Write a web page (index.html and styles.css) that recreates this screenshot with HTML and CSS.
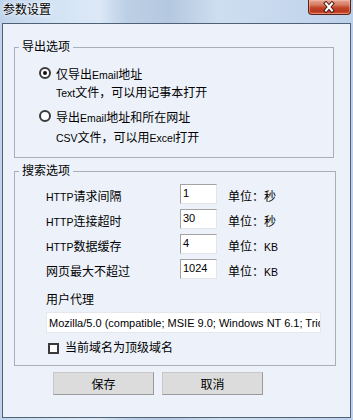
FILE: index.html
```html
<!DOCTYPE html>
<html lang="zh-CN">
<head>
<meta charset="utf-8">
<title>参数设置</title>
<link rel="stylesheet" href="styles.css">
</head>
<body>
<div class="window">
  <div class="titlebar">
    <span class="title">参数设置</span>
    <div class="close">
      <svg width="43" height="15" viewBox="0 0 43 15">
        <path d="M19 3.5 L25 10.5 M25 3.5 L19 10.5" stroke="#4a1a12" stroke-width="4" stroke-linecap="square"/>
        <path d="M19 3.5 L25 10.5 M25 3.5 L19 10.5" stroke="#ffffff" stroke-width="2" stroke-linecap="square"/>
      </svg>
    </div>
  </div>
  <div class="client">
    <fieldset class="group g1">
      <legend>导出选项</legend>
      <div class="group-body export">
        <label class="opt"><span class="radio checked"></span><span>仅导出<span class="lat">Email</span>地址</span></label>
        <div class="desc"><span class="lat">Text</span>文件，可以用记事本打开</div>
        <label class="opt opt2"><span class="radio"></span><span>导出<span class="lat">Email</span>地址和所在网址</span></label>
        <div class="desc desc2"><span class="lat">CSV</span>文件，可以用<span class="lat">Excel</span>打开</div>
      </div>
    </fieldset>
    <fieldset class="group g2">
      <legend>搜索选项</legend>
      <div class="group-body search">
        <div class="fields">
          <span class="lbl"><span class="lat">HTTP</span>请求间隔</span><span class="input">1</span><span class="unit">单位：秒</span>
          <span class="lbl"><span class="lat">HTTP</span>连接超时</span><span class="input">30</span><span class="unit">单位：秒</span>
          <span class="lbl"><span class="lat">HTTP</span>数据缓存</span><span class="input">4</span><span class="unit">单位：<span class="lat">KB</span></span>
          <span class="lbl">网页最大不超过</span><span class="input">1024</span><span class="unit">单位：<span class="lat">KB</span></span>
        </div>
        <div class="ua-label">用户代理</div>
        <div class="ua">Mozilla/5.0 (compatible; MSIE 9.0; Windows NT 6.1; Trident/5.0)</div>
        <label class="chk"><span class="box"></span>当前域名为顶级域名</label>
      </div>
    </fieldset>
    <div class="buttons">
      <button class="btn">保存</button>
      <button class="btn">取消</button>
    </div>
  </div>
</div>
</body>
</html>
```
FILE: styles.css
```css
html, body {
  margin: 0;
  padding: 0;
  background: #c6d9ef;
}
body {
  font-family: "Liberation Sans", "Noto Sans CJK SC", sans-serif;
  font-size: 12px;
  color: #000;
}
.lat {
  font-family: "Liberation Sans", sans-serif;
  font-size: 10.5px;
}
.window {
  width: 353px;
  height: 420px;
  background:
    linear-gradient(90deg, #bfd4ec 0%, #d3e3f4 15%, #dce8f6 28%, #bccfe5 36%, #b4c8e0 48%, #cddef0 62%, #c6d8ed 80%, #bdd1ea 100%);
  overflow: hidden;
}
.titlebar {
  height: 23px;
  display: flex;
  justify-content: space-between;
  align-items: flex-start;
}
.title {
  margin: 3px 0 0 3px;
  line-height: 14px;
  font-size: 12px;
  text-shadow: 0 0 6px #fff, 0 0 3px #fff;
}
.close {
  width: 43px;
  height: 15px;
  margin-right: 2px;
  box-sizing: border-box;
  border: 1px solid #5c2216;
  border-top: none;
  border-radius: 0 0 4px 4px;
  background: linear-gradient(180deg, #e5a796 0%, #d57a63 35%, #c24428 55%, #b9381d 80%, #cf5d3f 100%);
  box-shadow: inset 0 0 0 1px rgba(255, 200, 180, 0.45);
  display: flex;
  align-items: center;
  justify-content: center;
}
.close svg {
  display: block;
  margin-left: -2px;
}
.client {
  margin: 0 2px 0 2px;
  height: 393px;
  border: 1px solid #4f6175;
  background: #edf2fa;
  display: flex;
  flex-direction: column;
}
.group {
  margin: 0 0 0 11px;
  padding: 0;
  border: 1px solid #a7b0ba;
  box-sizing: border-box;
}
.group legend {
  margin-left: 4px;
  padding: 0 3px;
  line-height: 14px;
  font-size: 12px;
}
.g1 {
  margin-top: 16px;
  width: 320px;
}
.g2 {
  margin-top: 6px;
  width: 322px;
}
.export {
  padding: 9px 0 9px 24px;
  display: flex;
  flex-direction: column;
}
.opt {
  display: flex;
  align-items: center;
  height: 20px;
  gap: 5px;
}
.opt2 {
  margin-top: 3px;
}
.radio {
  width: 12px;
  height: 12px;
  box-sizing: border-box;
  border: 2px solid #3a3a3a;
  border-radius: 50%;
  background: #fff;
  display: flex;
  align-items: center;
  justify-content: center;
}
.radio.checked::after {
  content: "";
  width: 4px;
  height: 4px;
  border-radius: 50%;
  background: #111;
}
.desc {
  height: 20px;
  line-height: 20px;
  padding-left: 17px;
}
.desc2 {
  margin-top: 2px;
}
.search {
  padding: 6px 0 10px 31px;
  display: flex;
  flex-direction: column;
}
.fields {
  display: grid;
  grid-template-columns: 134px 37px auto;
  grid-auto-rows: 20px;
  row-gap: 5px;
  align-items: end;
}
.lbl, .unit {
  line-height: 14px;
}
.unit {
  margin-left: 11px;
}
.input {
  height: 20px;
  box-sizing: border-box;
  background: #fff;
  border: 1px solid;
  border-color: #a3a3a3 #e2e6ea #e2e6ea #a3a3a3;
  padding: 1px 2px;
  font-size: 11px;
  line-height: 14px;
  align-self: stretch;
}
.ua-label {
  margin-top: 14px;
  line-height: 14px;
}
.ua {
  margin-top: 5px;
  width: 275px;
  height: 21px;
  box-sizing: border-box;
  background: #fff;
  border: 1px solid #e4e8ec;
  padding: 3px 2px 0;
  font-size: 11px;
  line-height: 14px;
  white-space: nowrap;
  overflow: hidden;
}
.chk {
  margin-top: 8px;
  display: flex;
  align-items: center;
  gap: 6px;
  line-height: 14px;
  padding-left: 2px;
}
.box {
  width: 11px;
  height: 11px;
  box-sizing: border-box;
  border: 2px solid #3a3a3a;
  background: #fff;
}
.buttons {
  margin: 6px 0 0 50px;
  display: flex;
  gap: 8px;
}
.btn {
  width: 101px;
  height: 23px;
  margin: 0;
  padding: 0;
  border: 1px solid #a9a9a9;
  border-color: #c8c8c8 #9a9a9a #9a9a9a #c8c8c8;
  background: #dcdcdc;
  font-family: "Liberation Sans", "Noto Sans CJK SC", sans-serif;
  font-size: 12px;
  color: #000;
}
```
